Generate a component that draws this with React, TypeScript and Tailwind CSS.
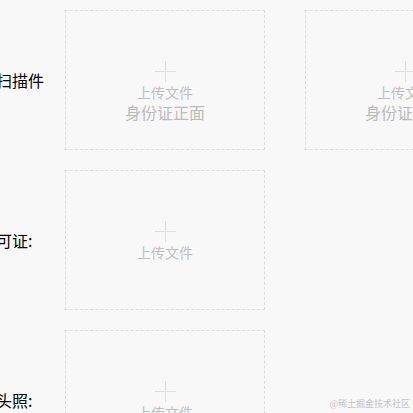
import React from "react";

function PlusIcon() {
  return (
    <svg width="21" height="21" viewBox="0 0 21 21" className="block">
      <line x1="0" y1="10.5" x2="21" y2="10.5" stroke="#dddddd" strokeWidth="1" />
      <line x1="10.5" y1="0" x2="10.5" y2="21" stroke="#dddddd" strokeWidth="1" />
    </svg>
  );
}

function UploadBox({ hint }: { hint?: string }) {
  return (
    <div className="w-[200px] h-[140px] shrink-0 border border-dashed border-[#dddddd] flex flex-col items-center pt-[50px]">
      <PlusIcon />
      <span className="text-sm leading-5 text-[#bfbfbf]">上传文件</span>
      {hint && <span className="text-base leading-5 text-[#bbbbbb]">{hint}</span>}
    </div>
  );
}

const rows = [
  { label: "身份证扫描件", boxes: ["身份证正面", "身份证反面"] },
  { label: "营业许可证:", boxes: [""] },
  { label: "负责人头照:", boxes: [""] },
];

export default function App() {
  return (
    <div
      className="relative h-screen overflow-hidden bg-[#f8f8f8]"
      style={{ fontFamily: '"Noto Sans CJK SC", "Noto Sans", sans-serif' }}
    >
      <div className="-ml-[52px] pt-[10px] flex flex-col gap-5">
        {rows.map((row) => (
          <div key={row.label} className="flex items-center">
            <div className="w-[117px] shrink-0 whitespace-nowrap text-base leading-6 text-black">
              {row.label}
            </div>
            <div className="flex gap-10">
              {row.boxes.map((b, i) => (
                <UploadBox key={i} hint={b || undefined} />
              ))}
            </div>
          </div>
        ))}
      </div>
      <div className="absolute right-[3px] bottom-[3px] text-[9px] leading-3 text-[#c4c4c4] whitespace-nowrap">
        @稀土掘金技术社区
      </div>
    </div>
  );
}
